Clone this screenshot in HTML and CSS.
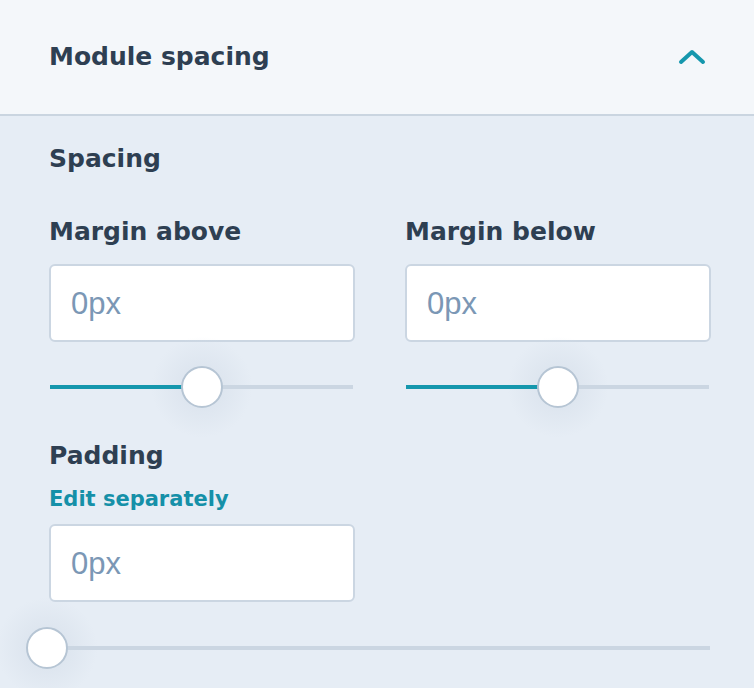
FILE: index.html
```html
<!DOCTYPE html>
<html>
<head>
<meta charset="utf-8">
<link rel="stylesheet" href="styles.css">
</head>
<body>
<div class="panel">
  <div class="header">
    <div class="title">Module spacing</div>
    <svg class="chevron" width="28" height="16" viewBox="0 0 28 16"><polyline points="3,13 14,3 25,13" fill="none" stroke="#1597ad" stroke-width="4" stroke-linecap="round" stroke-linejoin="round"/></svg>
  </div>
  <div class="body">
    <div class="section-title">Spacing</div>
    <div class="row">
      <div class="field">
        <div class="label">Margin above</div>
        <div class="input"><span class="placeholder">0px</span></div>
        <div class="slider">
          <div class="halo" style="left:50%"></div>
          <div class="track"></div>
          <div class="fill" style="width:50%"></div>
          <div class="thumb" style="left:50%"></div>
        </div>
      </div>
      <div class="field">
        <div class="label">Margin below</div>
        <div class="input"><span class="placeholder">0px</span></div>
        <div class="slider">
          <div class="halo" style="left:50%"></div>
          <div class="track"></div>
          <div class="fill" style="width:50%"></div>
          <div class="thumb" style="left:50%"></div>
        </div>
      </div>
    </div>
    <div class="padding-block">
      <div class="label">Padding</div>
      <div class="link">Edit separately</div>
      <div class="input narrow"><span class="placeholder">0px</span></div>
      <div class="slider wide">
        <div class="halo" style="left:0%"></div>
        <div class="track"></div>
        <div class="fill" style="width:0%"></div>
        <div class="thumb" style="left:0%"></div>
      </div>
    </div>
  </div>
</div>
</body>
</html>
```

FILE: styles.css
```css
* { box-sizing: border-box; }
html, body { margin: 0; padding: 0; }
body {
  width: 754px;
  height: 688px;
  overflow: hidden;
  background: #e6edf5;
  font-family: "DejaVu Sans", sans-serif;
  color: #2e3f52;
}
.panel { width: 754px; }
.header {
  height: 116px;
  background: #f4f7fa;
  border-bottom: 2px solid #cad5e0;
  display: flex;
  align-items: center;
  justify-content: space-between;
  padding: 0 48px 0 49px;
}
.title {
  font-size: 25px;
  line-height: 32px;
  font-weight: 700;
}
.chevron { display: block; }
.body {
  padding: 27px 43px 0 49px;
}
.section-title {
  font-size: 25px;
  line-height: 32px;
  font-weight: 700;
}
.row {
  display: grid;
  grid-template-columns: 306px 306px;
  column-gap: 50px;
  margin-top: 41px;
}
.label {
  font-size: 25px;
  line-height: 32px;
  font-weight: 700;
}
.input {
  margin-top: 16px;
  height: 78px;
  background: #ffffff;
  border: 2px solid #cbd6e2;
  border-radius: 6px;
  display: flex;
  align-items: center;
  padding: 2px 0 0 20px;
}
.input.narrow { width: 306px; margin-top: 12px; }
.placeholder {
  font-family: "Liberation Sans", Arial, sans-serif;
  font-size: 31px;
  color: #7b97b5;
}
.slider {
  position: relative;
  height: 42px;
  margin: 24px 2px 0 1px;
}
.halo {
  position: absolute;
  top: -30px;
  width: 102px;
  height: 102px;
  margin-left: -51px;
  border-radius: 50%;
  background: radial-gradient(circle, rgba(214, 223, 234, 0.5) 30%, rgba(214, 223, 234, 0) 70%);
}
.track {
  position: absolute;
  left: 0; right: 0;
  top: 19px;
  height: 4px;
  background: #cbd6e2;
}
.fill {
  position: absolute;
  left: 0;
  top: 19px;
  height: 4px;
  background: #1597ad;
}
.thumb {
  position: absolute;
  top: 0;
  width: 42px;
  height: 42px;
  margin-left: -21px;
  border-radius: 50%;
  background: #ffffff;
  border: 2px solid #b6c5d4;
}
.padding-block { margin-top: 32px; }
.link {
  margin-top: 14px;
  font-size: 21px;
  line-height: 26px;
  font-weight: 700;
  color: #1590a8;
}
.slider.wide {
  margin: 25px 1px 0 -2px;
}
```
